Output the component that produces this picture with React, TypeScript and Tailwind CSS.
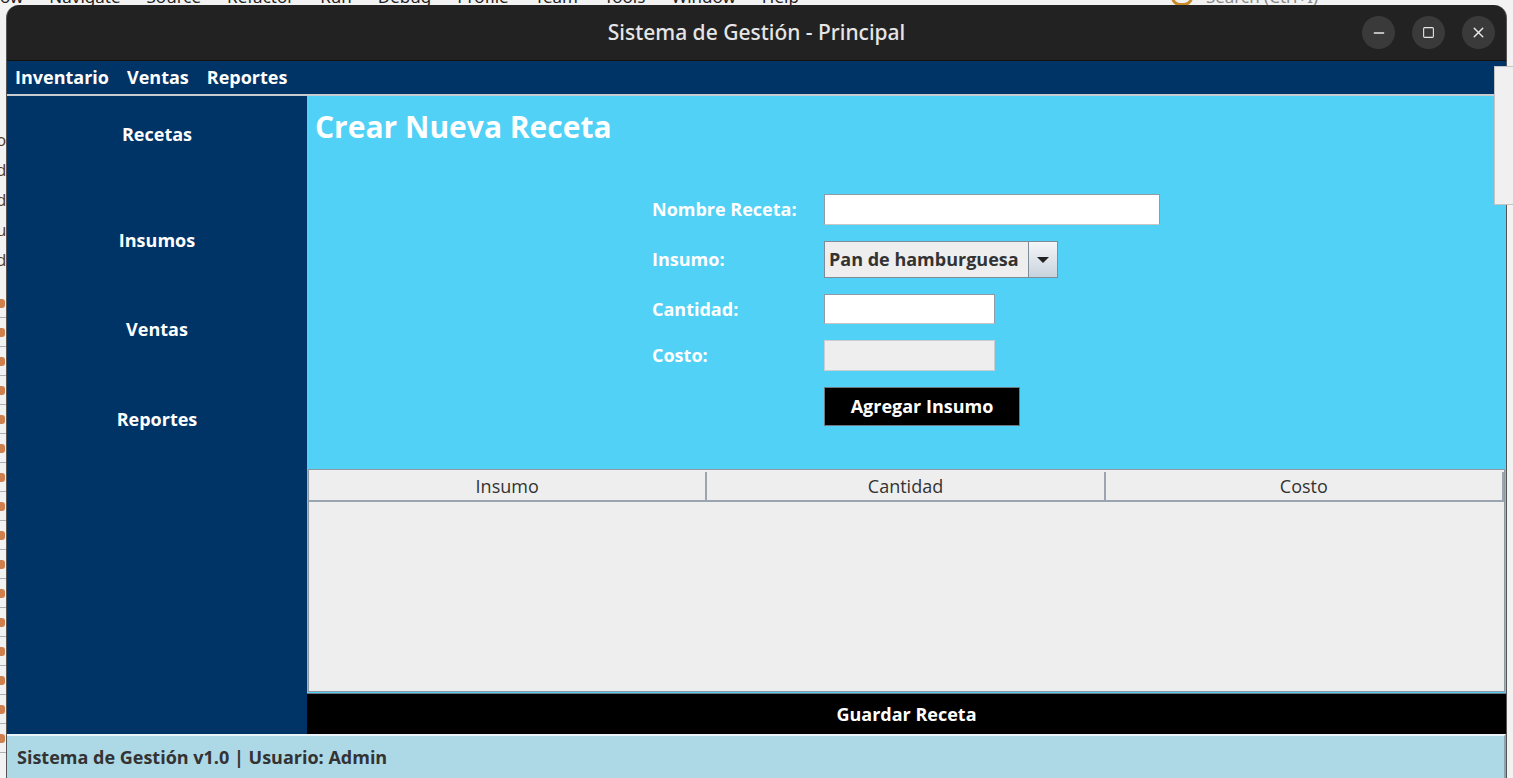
import { Minus, Square, X } from "lucide-react";

const ideMenu = ["ow", "Navigate", "Source", "Refactor", "Run", "Debug", "Profile", "Team", "Tools", "Window", "Help"];

function SideItem({ label, mt }: { label: string; mt: string }) {
  return (
    <div className={`${mt} h-[24px] flex items-center justify-center text-[18px] font-bold text-white`}>
      {label}
    </div>
  );
}

function FormLabel({ children }: { children: string }) {
  return <div className="flex items-center text-[18px] font-bold text-white">{children}</div>;
}

export default function App() {
  return (
    <div className="relative w-[1513px] h-[778px] overflow-hidden bg-[#f2f2f2] font-['Open_Sans',sans-serif]">
      {/* ide behind the window */}
      <div className="h-[5px] overflow-hidden flex text-[17px] text-[#222] leading-none font-['Noto_Sans',sans-serif]">
        <div className="-mt-[12px] flex gap-[26px]">
          {ideMenu.map((m) => (
            <span key={m}>{m}</span>
          ))}
        </div>
        <div className="-mt-[12px] ml-[372px] w-[22px] h-[18px] rounded-full border-[3px] border-[#c98a2a]" />
        <div className="-mt-[12px] ml-[13px] text-[#888]">Search (Ctrl+I)</div>
      </div>

      <div className="flex">
        {/* ide left strip */}
        <div className="w-[6px] flex flex-col pt-[120px] text-[17px] text-[#5a3a1a] leading-[30px] overflow-hidden">
          {["o", "d", "d", "u", "d"].map((c, i) => (
            <span key={i} className="-ml-[4px]">{c}</span>
          ))}
          <div className="flex flex-col mt-[14px]">
            {Array.from({ length: 16 }).map((_, i) => (
              <div key={i} className="h-[29px] flex flex-col justify-center border-b border-[#a9b0b6]">
                <div className="h-[9px] w-[5px] rounded-r-[3px] bg-[#d0804e]" />
              </div>
            ))}
          </div>
        </div>

        {/* window */}
        <div className="w-[1501px] h-[773px] flex flex-col rounded-t-[13px] overflow-hidden bg-[#222222] border-x border-[#555]">
          <div className="h-[55px] flex items-center relative shrink-0">
            <div className="flex-1 text-center text-[21px] text-[#e6e6e6] font-medium font-['Noto_Sans',sans-serif]">
              Sistema de Gestión - Principal
            </div>
            <div className="absolute right-[11px] top-[11px] flex gap-[17px]">
              <div className="w-[33px] h-[33px] rounded-full bg-[#3a3a3a] flex items-end justify-center pb-[8px]">
                <Minus size={16} strokeWidth={2} className="text-[#e8e8e8]" />
              </div>
              <div className="w-[33px] h-[33px] rounded-full bg-[#3a3a3a] flex items-center justify-center">
                <Square size={13} strokeWidth={2} className="text-[#e8e8e8]" />
              </div>
              <div className="w-[33px] h-[33px] rounded-full bg-[#3a3a3a] flex items-center justify-center">
                <X size={17} strokeWidth={2} className="text-[#e8e8e8]" />
              </div>
            </div>
          </div>
          <div className="h-px bg-[#111] shrink-0" />

          {/* menu bar */}
          <div className="h-[33px] bg-[#003366] flex items-center gap-[18px] pl-[8px] text-[18px] font-bold text-white shrink-0">
            <span>Inventario</span>
            <span>Ventas</span>
            <span>Reportes</span>
          </div>
          <div className="h-[2px] bg-[#c8ccd0] shrink-0" />

          {/* content */}
          <div className="h-[638px] flex shrink-0">
            <div className="w-[300px] bg-[#003366] flex flex-col">
              <SideItem label="Recetas" mt="mt-[26px]" />
              <SideItem label="Insumos" mt="mt-[82px]" />
              <SideItem label="Ventas" mt="mt-[65px]" />
              <SideItem label="Reportes" mt="mt-[66px]" />
            </div>

            <div className="flex-1 flex flex-col bg-[#51d1f6]">
              <div className="h-[373px] shrink-0 pl-[8px] pt-[11px]">
                <h1 className="text-[30px] font-bold text-white leading-[40px]">Crear Nueva Receta</h1>
                <div className="mt-[47px] ml-[337px] grid grid-cols-[172px_auto] gap-y-[16px] justify-start">
                  <FormLabel>Nombre Receta:</FormLabel>
                  <div className="w-[336px] h-[31px] bg-white border border-[#8e9aa6] border-b-[#c7c7c7]" />

                  <FormLabel>Insumo:</FormLabel>
                  <div className="w-[234px] h-[37px] flex border border-[#7f8b97] bg-[#eeeeee]">
                    <div className="flex-1 flex items-center pl-[4px] text-[18px] font-bold text-[#333] whitespace-nowrap">
                      Pan de hamburguesa
                    </div>
                    <div className="w-[29px] shrink-0 border-l border-[#7f8b97] bg-gradient-to-b from-[#f4f6f8] to-[#c9d3dd] flex items-center justify-center">
                      <div className="w-0 h-0 border-x-[6px] border-x-transparent border-t-[6px] border-t-[#222]" />
                    </div>
                  </div>

                  <FormLabel>Cantidad:</FormLabel>
                  <div className="w-[171px] h-[30px] bg-white border border-[#8e9aa6] border-b-[#c7c7c7]" />

                  <FormLabel>Costo:</FormLabel>
                  <div className="w-[171px] h-[31px] bg-[#eeeeee] border border-[#c9ced3]" />

                  <div />
                  <div className="w-[196px] h-[39px] bg-black border border-[#6f7780] flex items-center justify-center text-[18px] font-bold text-white">
                    Agregar Insumo
                  </div>
                </div>
              </div>

              {/* table */}
              <div className="flex-1 ml-px mr-px flex flex-col bg-[#eeeeee] border border-[#8e99a4]">
                <div className="grid grid-cols-3 h-[32px] pt-[2px] shrink-0 text-[18px] text-[#333]">
                  <div className="flex items-center justify-center border-r-2 border-b-2 border-[#9aa5b0]">Insumo</div>
                  <div className="flex items-center justify-center border-r-2 border-b-2 border-[#9aa5b0]">Cantidad</div>
                  <div className="flex items-center justify-center border-r-2 border-b-2 border-[#9aa5b0]">Costo</div>
                </div>
                <div className="flex-1" />
              </div>
              <div className="h-[41px] mt-px shrink-0 bg-black border-t border-[#6f7780] flex items-center justify-center text-[18px] font-bold text-white">
                Guardar Receta
              </div>
            </div>
          </div>

          {/* status bar */}
          <div className="flex-1 bg-[#add8e6] border-t-2 border-[#e8f4f8] border-r-2 border-r-[#8aa5b0] flex items-center pl-[10px] text-[18px] font-bold text-[#333]">
            Sistema de Gestión v1.0 | Usuario: Admin
          </div>
        </div>
      </div>

      {/* overlapping window on the right edge */}
      <div className="absolute left-[1494px] top-[66px] w-[30px] h-[139px] bg-[#f0f0f0] border border-[#c4c4c4]" />
    </div>
  );
}
